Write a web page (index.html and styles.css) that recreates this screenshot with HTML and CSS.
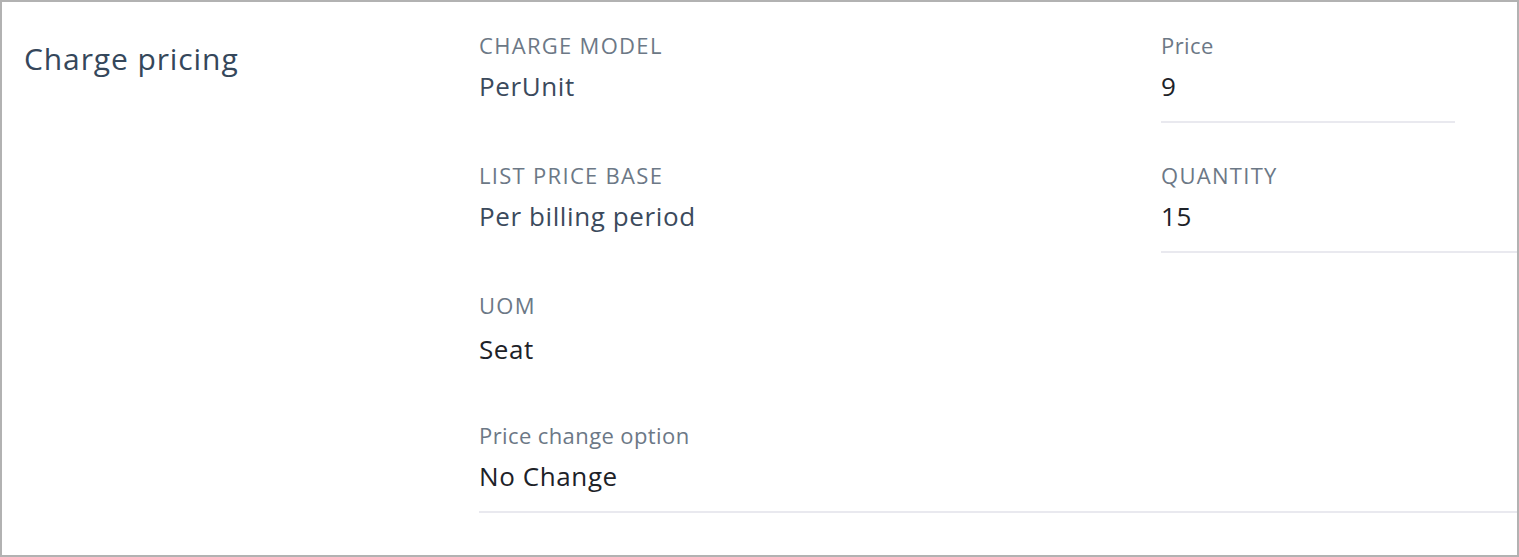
FILE: index.html
```html
<!DOCTYPE html>
<html lang="en">
<head>
<meta charset="utf-8">
<title>Charge pricing</title>
<link rel="stylesheet" href="styles.css">
</head>
<body>
<section class="card">
  <div class="card-side">
    <h2 class="card-title">Charge pricing</h2>
  </div>
  <div class="fields">
    <div class="field">
      <div class="field-label upper">CHARGE MODEL</div>
      <div class="field-value muted">PerUnit</div>
    </div>
    <div class="field ruled narrow">
      <div class="field-label">Price</div>
      <div class="field-value">9</div>
    </div>
    <div class="field">
      <div class="field-label upper">LIST PRICE BASE</div>
      <div class="field-value muted">Per billing period</div>
    </div>
    <div class="field ruled">
      <div class="field-label upper">QUANTITY</div>
      <div class="field-value">15</div>
    </div>
    <div class="field">
      <div class="field-label upper">UOM</div>
      <div class="field-value lowered">Seat</div>
    </div>
    <div class="field empty"></div>
    <div class="field ruled wide">
      <div class="field-label">Price change option</div>
      <div class="field-value">No Change</div>
    </div>
  </div>
</section>
</body>
</html>
```

FILE: styles.css
```css
html, body {
  margin: 0;
  padding: 0;
  background: #ffffff;
}

body {
  font-family: "Open Sans", "Noto Sans", sans-serif;
}

.card {
  box-sizing: border-box;
  width: 1519px;
  height: 557px;
  border: 2px solid #b2b2b2;
  display: flex;
  background: #ffffff;
}

.card-side {
  width: 477px;
  flex: none;
  box-sizing: border-box;
  padding: 39px 0 0 22px;
}

.card-title {
  margin: 0;
  font-size: 30px;
  line-height: 36px;
  font-weight: 400;
  color: #35475b;
  letter-spacing: 0.9px;
}

.fields {
  flex: 1;
  display: grid;
  grid-template-columns: 682px 1fr;
  row-gap: 38px;
  padding-top: 29px;
  align-content: start;
}

.field {
  box-sizing: border-box;
  height: 92px;
  padding-bottom: 19px;
  border-bottom: 2px solid transparent;
}

.field.ruled {
  border-bottom-color: #e9e9ef;
}

.field.narrow {
  width: 294px;
}

.field.wide {
  grid-column: 1 / -1;
}

.field-label {
  font-size: 22px;
  line-height: 28px;
  color: #6c7886;
  letter-spacing: 0.4px;
}

.field-label.upper {
  letter-spacing: 1.3px;
}

.field-value {
  margin-top: 11px;
  font-size: 26px;
  line-height: 32px;
  color: #1d2228;
  letter-spacing: 0.6px;
}

.field-value.muted {
  color: #3b4a5c;
}

.field-value.lowered {
  margin-top: 14px;
}
```
